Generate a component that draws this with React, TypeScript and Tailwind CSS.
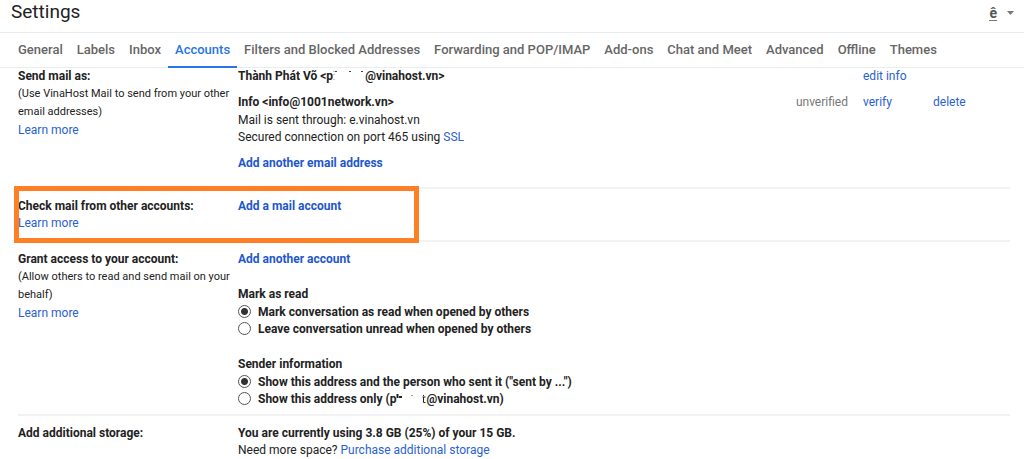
import type { ReactNode } from "react";

const tabs = [
  "General",
  "Labels",
  "Inbox",
  "Accounts",
  "Filters and Blocked Addresses",
  "Forwarding and POP/IMAP",
  "Add-ons",
  "Chat and Meet",
  "Advanced",
  "Offline",
  "Themes",
];

function TextLink({ children, bold = false }: { children: ReactNode; bold?: boolean }) {
  return (
    <a href="#" className={bold ? "font-bold text-[#2257cc]" : "text-[#2a61d3]"}>
      {children}
    </a>
  );
}

function Label({ title, note, learnMore = false }: { title: string; note?: string; learnMore?: boolean }) {
  return (
    <div className="w-[220px] shrink-0">
      <h2 className="font-bold leading-[17px]">{title}</h2>
      {note && <p className="text-[11px] leading-[18px]">{note}</p>}
      {learnMore && (
        <p className={note ? "leading-[18px]" : "leading-[17px]"}>
          <TextLink>Learn more</TextLink>
        </p>
      )}
    </div>
  );
}

function Radio({ name, checked = false, children }: { name: string; checked?: boolean; children: ReactNode }) {
  return (
    <label className="flex h-[17px] items-center gap-[7px] whitespace-nowrap">
      <input
        type="radio"
        name={name}
        defaultChecked={checked}
        className="size-[13px] shrink-0 appearance-none rounded-full border border-[#555] bg-white checked:bg-[radial-gradient(circle,#333_3px,white_4px)]"
      />
      <span>{children}</span>
    </label>
  );
}

export default function App() {
  return (
    <div className="overflow-hidden bg-white font-['Roboto','Liberation_Sans',sans-serif] text-[12px] text-[#222]">
      <header className="flex h-8 items-center justify-between pr-[10px] pl-[11px]">
        <h1 className="pb-2 text-[19px] leading-6">Settings</h1>
        <button type="button" aria-label="Input tools" className="flex items-center gap-[10px] pb-[6px] text-[#555]">
          <span className="border-b border-[#777] text-[14px] font-bold leading-[14px]">ê</span>
          <svg width="7" height="4" viewBox="0 0 7 4" fill="#777">
            <path d="M0 0h7L3.500 4z" />
          </svg>
        </button>
      </header>
      <nav className="flex h-9 border-y border-[#e9ecf1] pl-[11px] text-[13px] font-medium text-[#666]">
        {tabs.map((tab) => (
          <a
            key={tab}
            href="#"
            className={
              tab === "Accounts"
                ? "-mb-px flex items-center border-b-2 border-[#2a73e8] px-[7px] pt-px whitespace-nowrap text-[#2a73e8]"
                : "flex items-center px-[7px] whitespace-nowrap"
            }
          >
            {tab}
          </a>
        ))}
      </nav>
      <main className="pr-[14px] pl-[18px]">
        <section className="flex border-b-2 border-[#f2f2f2] pb-[15px]">
          <Label title="Send mail as:" note="(Use VinaHost Mail to send from your other email addresses)" learnMore />
          <div className="grow leading-[17px]">
            <div className="flex">
              <p className="grow font-bold">
                Thành Phát Võ &lt;p
                <svg width="32" height="9" viewBox="0 0 32 9" className="inline-block align-baseline" aria-hidden="true">
                  <path d="M1 0v1M1 3v1M1 8v1" stroke="#c77b45" />
                  <path d="M2 .5h2M16 .5h2M28 .5h2" stroke="#444" />
                </svg>
                @vinahost.vn&gt;
              </p>
              <p className="w-[147px]">
                <TextLink>edit info</TextLink>
              </p>
            </div>
            <div className="flex pt-[9px]">
              <div className="grow">
                <p className="font-bold">Info &lt;info@1001network.vn&gt;</p>
                <p className="leading-[18px]">Mail is sent through: e.vinahost.vn</p>
                <p>
                  Secured connection on port 465 using <TextLink>SSL</TextLink>
                </p>
              </div>
              <p className="pr-[15px] text-[#777]">unverified</p>
              <p className="w-[70px]">
                <TextLink>verify</TextLink>
              </p>
              <p className="w-[77px]">
                <TextLink>delete</TextLink>
              </p>
            </div>
            <p className="pt-[9px]">
              <TextLink bold>Add another email address</TextLink>
            </p>
          </div>
        </section>
        <section className="relative flex border-b-2 border-[#f2f2f2] pt-[9px] pb-2">
          <Label title="Check mail from other accounts:" learnMore />
          <p className="leading-[17px]">
            <TextLink bold>Add a mail account</TextLink>
          </p>
          <div className="pointer-events-none absolute -top-[3px] -bottom-[3px] -left-[4px] w-[405px] border-[5px] border-[#ff7f27]" />
        </section>
        <section className="flex border-b-2 border-[#f2f2f2] pt-[9px] pb-[7px]">
          <Label title="Grant access to your account:" note="(Allow others to read and send mail on your behalf)" learnMore />
          <div className="font-bold">
            <p className="leading-[17px]">
              <TextLink bold>Add another account</TextLink>
            </p>
            <fieldset className="mt-[17px]">
              <legend className="leading-[18px]">Mark as read</legend>
              <Radio name="read" checked>
                Mark conversation as read when opened by others
              </Radio>
              <Radio name="read">Leave conversation unread when opened by others</Radio>
            </fieldset>
            <fieldset className="mt-[18px]">
              <legend className="leading-[18px]">Sender information</legend>
              <Radio name="sender" checked>
                Show this address and the person who sent it ("sent by ...")
              </Radio>
              <Radio name="sender">
                Show this address only (p
                <svg width="30" height="9" viewBox="0 0 30 9" className="inline-block align-baseline" aria-hidden="true">
                  <path d="M1.500 0v4M3 3h3" stroke="#222" strokeWidth="2" />
                  <path d="M15 1.500h2" stroke="#999" />
                  <path d="M27.500 1v1M26.500 3h3M27.500 3v5.500h2" stroke="#222" fill="none" />
                </svg>
                @vinahost.vn)
              </Radio>
            </fieldset>
          </div>
        </section>
        <section className="flex pt-[9px]">
          <Label title="Add additional storage:" />
          <div className="leading-[17px]">
            <p className="font-bold">You are currently using 3.8 GB (25%) of your 15 GB.</p>
            <p>
              Need more space? <TextLink>Purchase additional storage</TextLink>
            </p>
          </div>
        </section>
      </main>
    </div>
  );
}
